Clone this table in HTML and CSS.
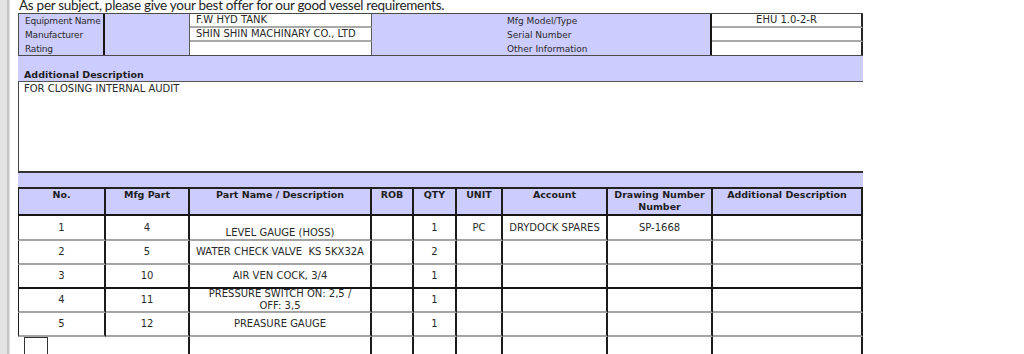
FILE: index.html
```html
<!DOCTYPE html>
<html lang="en">
<head>
<meta charset="utf-8">
<title>Requisition</title>
<link rel="stylesheet" href="styles.css">
</head>
<body>
<div class="page">
  <div class="rail"></div>
  <main class="main">
    <p class="intro">As per subject, please give your best offer for our good vessel requirements.</p>

    <section class="info">
      <div class="lab first">Equipment Name</div>
      <div class="blank"></div>
      <div class="val line">F.W HYD TANK</div>
      <div class="lab2">Mfg Model/Type</div>
      <div class="val line center last">EHU 1.0-2-R</div>

      <div class="lab first">Manufacturer</div>
      <div class="val line">SHIN SHIN MACHINARY CO., LTD</div>
      <div class="lab2">Serial Number</div>
      <div class="val line last"></div>

      <div class="lab first">Rating</div>
      <div class="val"></div>
      <div class="lab2">Other Information</div>
      <div class="val last"></div>
    </section>

    <div class="desc-head">Additional Description</div>
    <div class="desc-box">FOR CLOSING INTERNAL AUDIT</div>
    <div class="band"></div>

    <section class="items">
      <div class="th first">No.</div>
      <div class="th">Mfg Part</div>
      <div class="th">Part Name / Description</div>
      <div class="th">ROB</div>
      <div class="th">QTY</div>
      <div class="th">UNIT</div>
      <div class="th">Account</div>
      <div class="th">Drawing Number<br>Number</div>
      <div class="th">Additional Description</div>

      <div class="td first">1</div>
      <div class="td">4</div>
      <div class="td bottom">LEVEL GAUGE (HOSS)</div>
      <div class="td"></div>
      <div class="td">1</div>
      <div class="td">PC</div>
      <div class="td">DRYDOCK SPARES</div>
      <div class="td">SP-1668</div>
      <div class="td"></div>

      <div class="td first">2</div>
      <div class="td">5</div>
      <div class="td pre">WATER CHECK VALVE  KS 5KX32A</div>
      <div class="td"></div>
      <div class="td">2</div>
      <div class="td"></div>
      <div class="td"></div>
      <div class="td"></div>
      <div class="td"></div>

      <div class="td first dark">3</div>
      <div class="td dark">10</div>
      <div class="td dark">AIR VEN COCK, 3/4</div>
      <div class="td dark"></div>
      <div class="td dark">1</div>
      <div class="td dark"></div>
      <div class="td dark"></div>
      <div class="td dark"></div>
      <div class="td dark"></div>

      <div class="td first">4</div>
      <div class="td">11</div>
      <div class="td">PRESSURE SWITCH ON: 2,5 /<br>OFF: 3,5</div>
      <div class="td"></div>
      <div class="td">1</div>
      <div class="td"></div>
      <div class="td"></div>
      <div class="td"></div>
      <div class="td"></div>

      <div class="td first">5</div>
      <div class="td">12</div>
      <div class="td">PREASURE GAUGE</div>
      <div class="td"></div>
      <div class="td">1</div>
      <div class="td"></div>
      <div class="td"></div>
      <div class="td"></div>
      <div class="td"></div>

      <div class="td open span2"><span class="tick"></span></div>
      <div class="td open"></div>
      <div class="td open"></div>
      <div class="td open"></div>
      <div class="td open"></div>
      <div class="td open"></div>
      <div class="td open"></div>
      <div class="td open"></div>
    </section>
  </main>
</div>
</body>
</html>
```

FILE: styles.css
```css
html, body {
  margin: 0;
  padding: 0;
  background: #ffffff;
}

.page {
  display: flex;
  height: 354px;
  overflow: hidden;
}

.rail {
  flex: 0 0 10px;
  background: linear-gradient(to right, #e4e4e4 0 7px, #c6c6c6 7px 9px, #e2e2e2 9px 10px);
}

.main {
  padding-left: 8px;
  font-family: "DejaVu Sans", Verdana, sans-serif;
  font-size: 9px;
  color: #2a2a2a;
}

.intro {
  margin: -2px 0 0 0;
  padding-left: 1px;
  height: 15px;
  font-family: Lato, "Noto Sans", sans-serif;
  font-size: 13.5px;
  letter-spacing: -0.28px;
  line-height: 14px;
  color: #1e1e1e;
  white-space: nowrap;
}

/* ---------- equipment info ---------- */
.info {
  display: grid;
  width: 845px;
  grid-template-columns: 87px 85px 182px 340px 151px;
  grid-template-rows: 14px 14px 13px;
  border-top: 1px solid #4a4a4a;
  border-bottom: 1px solid #4a4a4a;
}

.info > div {
  box-sizing: border-box;
  display: flex;
  align-items: center;
  line-height: 12px;
  white-space: nowrap;
}

.info .lab {
  background: #ccccff;
  border-left: 1px solid #4a4a4a;
  border-right: 2px solid #151515;
  padding-left: 6px;
  letter-spacing: -0.2px;
}

.info .blank {
  grid-row: span 3;
  background: #ccccff;
  border-right: 1px solid #5a5a5a;
}

.info .val {
  background: #ffffff;
  padding-left: 6px;
  font-size: 10px;
  border-right: 1px solid #5a5a5a;
}

.info .val.line {
  border-bottom: 2px solid #a9a9a9;
}

.info .val.center {
  justify-content: center;
  padding-left: 0;
}

.info .val.last {
  border-right: 2px solid #262626;
}

.info .lab2 {
  background: #ccccff;
  padding-left: 135px;
  border-right: 2px solid #151515;
}

/* ---------- additional description ---------- */
.desc-head {
  box-sizing: border-box;
  width: 845px;
  height: 26px;
  background: #ccccff;
  border-bottom: 1px solid #555555;
  display: flex;
  align-items: flex-end;
  padding-left: 6px;
  font-weight: bold;
  font-size: 9.5px;
  line-height: 12px;
  color: #1e1e1e;
}

.desc-box {
  box-sizing: border-box;
  width: 845px;
  height: 91px;
  border-left: 1px solid #444444;
  border-bottom: 2px solid #333333;
  padding: 1px 0 0 5px;
  font-size: 10px;
  line-height: 12px;
}

.band {
  width: 845px;
  height: 14px;
  background: #ccccff;
}

/* ---------- items table ---------- */
.items {
  display: grid;
  width: 845px;
  grid-template-columns: 88px 84px 182px 42px 43px 46px 105px 105px 150px;
  grid-template-rows: 27px 25px 24px 24px 24px 24px 30px;
  border-top: 2px solid #222222;
}

.items > div {
  box-sizing: border-box;
  border-right: 2px solid #1c1c1c;
  text-align: center;
  line-height: 12px;
}

.items .first {
  border-left: 1px solid #1c1c1c;
}

.items .th {
  background: #ccccff;
  font-weight: bold;
  font-size: 9.5px;
  color: #1e1e1e;
  border-bottom: 2px solid #151515;
}

.items .td {
  display: flex;
  align-items: center;
  justify-content: center;
  font-size: 10px;
  border-bottom: 2px solid #a4a4a4;
}

.items .td.bottom {
  align-items: flex-end;
}

.items .td.pre {
  white-space: pre;
}

.items .td.dark {
  border-bottom-color: #151515;
}

.items .td.open {
  border-bottom: none;
}

.items .td.span2 {
  grid-column: span 2;
  justify-content: flex-start;
  align-items: flex-start;
  padding-left: 6px;
}

.tick {
  display: block;
  width: 24px;
  height: 24px;
  box-sizing: border-box;
  border: 1px solid #333333;
}
```
